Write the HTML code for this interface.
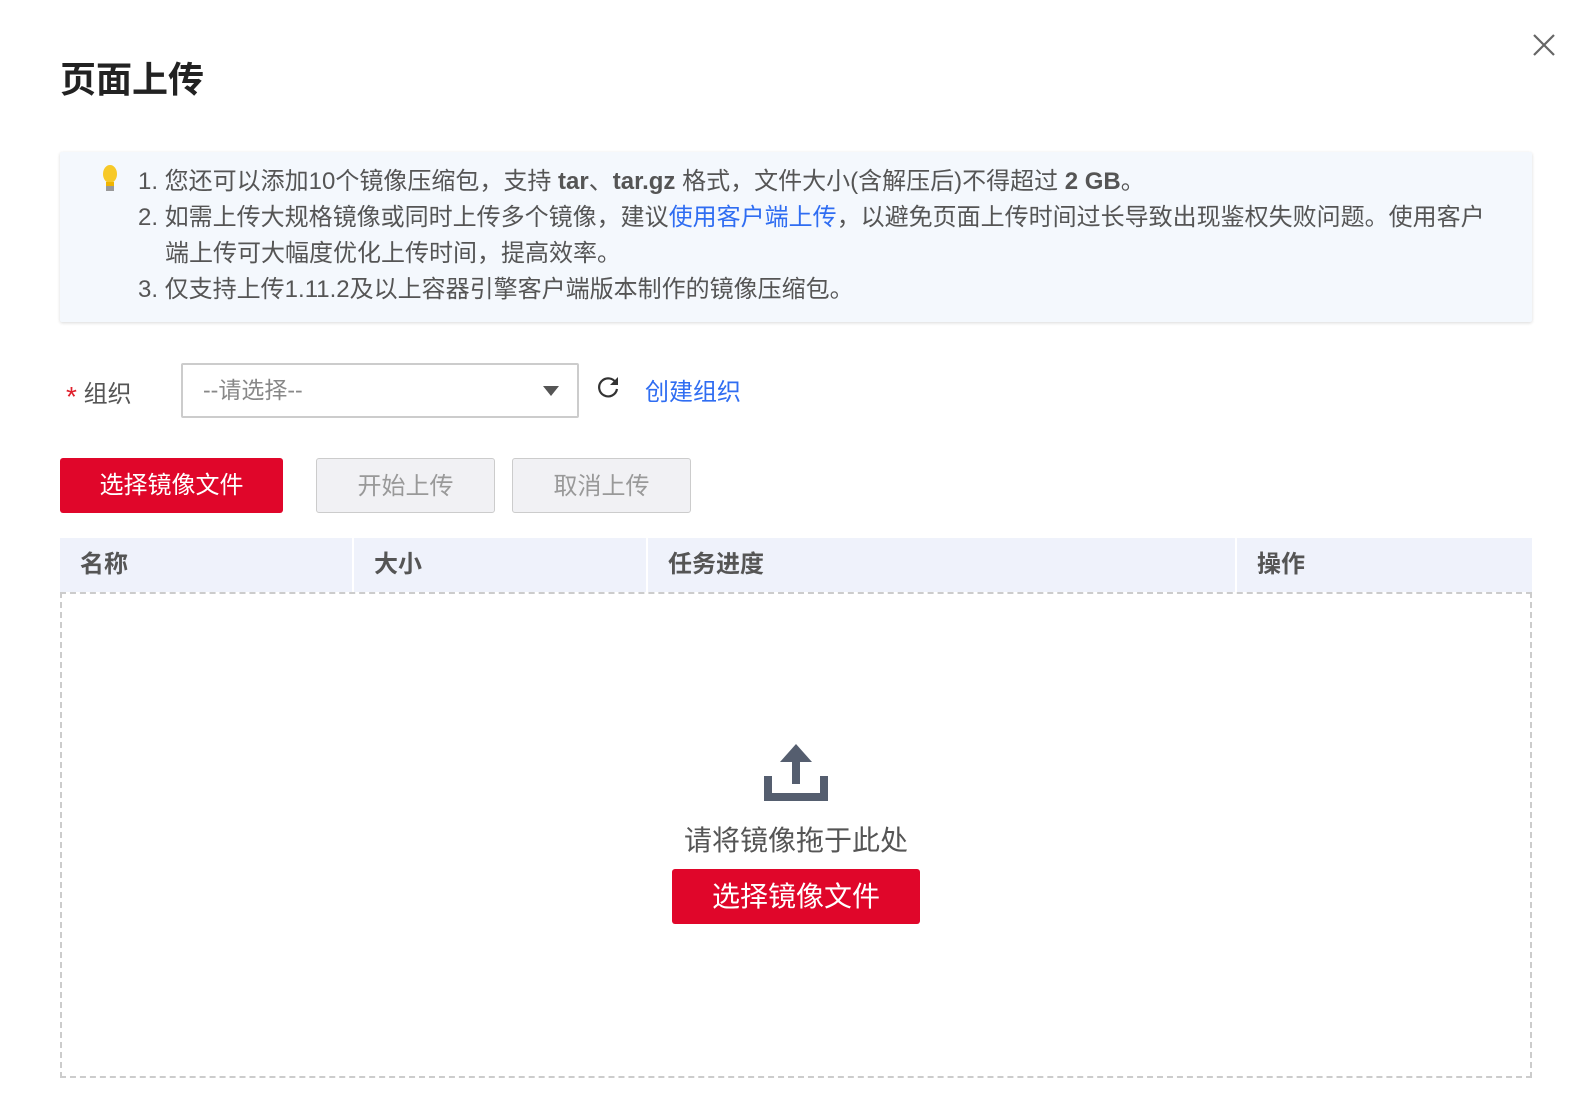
<!DOCTYPE html>
<html><head><meta charset="utf-8"><style>
*{margin:0;padding:0;box-sizing:border-box}
body{width:1593px;height:1099px;background:#fff;position:relative;overflow:hidden;font-family:"Liberation Sans","Noto Sans CJK SC",sans-serif;color:#333}
.a{position:absolute}
.note{left:60px;top:152px;width:1472px;height:170px;background:#f4f8fd;box-shadow:0 1px 3px rgba(0,0,0,.15);border-radius:2px}
.note p{position:absolute;left:78px;font-size:24px;color:#555;white-space:nowrap;line-height:36px}
.btn{position:absolute;top:458px;height:55px;font-size:24px;text-align:center;line-height:55px;border-radius:3px}
.th{position:absolute;top:538px;height:54px;background:#eff2fb;font-size:24px;font-weight:bold;color:#555;line-height:54px;padding-left:20px}
</style></head><body>
<div class="a" style="left:60px;top:51px;font-size:36px;font-weight:bold;color:#222">页面上传</div>
<svg class="a" style="left:1532px;top:33px" width="24" height="24" viewBox="0 0 24 24"><path d="M2 2L22 22M22 2L2 22" stroke="#666" stroke-width="2.2"/></svg>
<div class="a note">
<svg style="position:absolute;left:40px;top:12px" width="20" height="30" viewBox="0 0 20 30"><ellipse cx="10" cy="10" rx="7" ry="9" fill="#f7c928"/><rect x="6" y="18" width="8" height="8" fill="#f0b400"/><rect x="6" y="22" width="8" height="5" fill="#999"/></svg>
<p style="top:12px">1. 您还可以添加10个镜像压缩包，支持 <b>tar</b>、<b>tar.gz</b> 格式，文件大小(含解压后)不得超过 <b>2 GB</b>。</p>
<p style="top:48px">2. 如需上传大规格镜像或同时上传多个镜像，建议<span style="color:#2f6df2">使用客户端上传</span>，以避免页面上传时间过长导致出现鉴权失败问题。使用客户</p>
<p style="top:84px;left:105px">端上传可大幅度优化上传时间，提高效率。</p>
<p style="top:120px">3. 仅支持上传1.11.2及以上容器引擎客户端版本制作的镜像压缩包。</p>
</div>
<div class="a" style="left:66px;top:374px;font-size:24px;color:#555"><span style="color:#e0202c;font-size:28px;vertical-align:-4px">*</span> 组织</div>
<div class="a" style="left:181px;top:363px;width:398px;height:55px;border:2px solid #ccc;border-radius:2px;font-size:23px;color:#888;line-height:51px;padding-left:20px">--请选择--
<svg style="position:absolute;right:18px;top:21px" width="16" height="10"><path d="M0 0H16L8 10Z" fill="#555"/></svg></div>
<svg class="a" style="left:597px;top:375px" width="24" height="24" viewBox="0 0 24 24"><path d="M19 8A9 9 0 1 0 20 14" fill="none" stroke="#333" stroke-width="2.2"/><path d="M21 2V10H13Z" fill="#333"/></svg>
<div class="a" style="left:645px;top:372px;font-size:24px;color:#2f6df2">创建组织</div>
<div class="btn" style="left:60px;width:223px;background:#e0062a;color:#fff">选择镜像文件</div>
<div class="btn" style="left:316px;width:179px;background:#f1f1f4;border:1px solid #ccc;color:#999">开始上传</div>
<div class="btn" style="left:512px;width:179px;background:#f1f1f4;border:1px solid #ccc;color:#999">取消上传</div>
<div class="th" style="left:60px;width:292px">名称</div>
<div class="th" style="left:354px;width:292px">大小</div>
<div class="th" style="left:648px;width:587px">任务进度</div>
<div class="th" style="left:1237px;width:295px">操作</div>
<div class="a" style="left:60px;top:592px;width:1472px;height:486px;border:2px dashed #ccc"></div>
<svg class="a" style="left:764px;top:744px" width="64" height="57" viewBox="0 0 64 57"><path d="M32 0L48 18H36V40H28V18H16Z" fill="#555e6f"/><path d="M0 32H8V49H56V32H64V57H0Z" fill="#555e6f"/></svg>
<div class="a" style="left:596px;top:819px;width:400px;text-align:center;font-size:28px;color:#555">请将镜像拖于此处</div>
<div class="a" style="left:672px;top:869px;width:248px;height:55px;background:#e0062a;color:#fff;font-size:28px;text-align:center;line-height:55px;border-radius:3px">选择镜像文件</div>
</body></html>
